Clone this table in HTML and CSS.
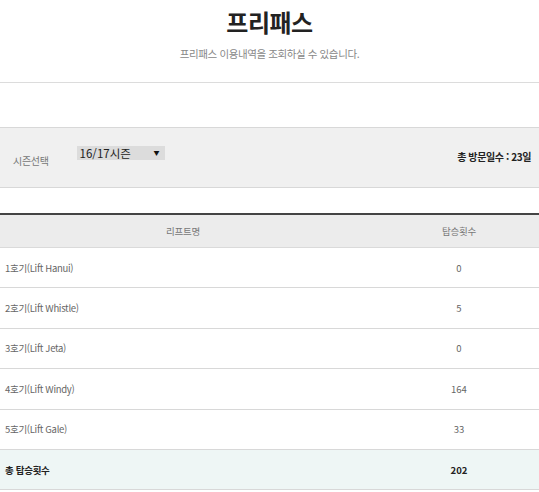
FILE: index.html
```html
<!DOCTYPE html>
<html lang="ko">
<head>
<meta charset="utf-8">
<title>프리패스</title>
<link rel="stylesheet" href="styles.css">
</head>
<body>
<div class="page">
  <header class="head">
    <h1 class="title">프리패스</h1>
    <p class="sub">프리패스 이용내역을 조회하실 수 있습니다.</p>
  </header>

  <section class="filter">
    <div class="filter-left">
      <span class="filter-label">시즌선택</span>
      <div class="select"><span>16/17시즌</span><span class="arrow">▼</span></div>
    </div>
    <div class="visits">총 방문일수 : 23일</div>
  </section>

  <table class="lifts">
    <thead>
      <tr><th class="c1">리프트명</th><th class="c2">탑승횟수</th></tr>
    </thead>
    <tbody>
      <tr><td class="c1">1호기(Lift Hanui)</td><td class="c2">0</td></tr>
      <tr><td class="c1">2호기(Lift Whistle)</td><td class="c2">5</td></tr>
      <tr><td class="c1">3호기(Lift Jeta)</td><td class="c2">0</td></tr>
      <tr><td class="c1">4호기(Lift Windy)</td><td class="c2">164</td></tr>
      <tr><td class="c1">5호기(Lift Gale)</td><td class="c2">33</td></tr>
      <tr class="total"><td class="c1">총 탑승횟수</td><td class="c2">202</td></tr>
    </tbody>
  </table>
</div>
</body>
</html>
```
FILE: styles.css
```css
html, body {
  margin: 0;
  padding: 0;
  background: #fff;
  overflow: hidden;
}
body {
  font-family: "Noto Sans CJK KR", "Noto Sans", sans-serif;
  color: #555;
}
.page {
  width: 539px;
  overflow: hidden;
}
.head {
  text-align: center;
  border-bottom: 1px solid #dcdcdc;
  height: 83px;
  box-sizing: border-box;
  padding-top: 6px;
}
.title {
  margin: 0;
  font-size: 24px;
  line-height: 32px;
  font-weight: 700;
  color: #222;
  letter-spacing: -0.5px;
}
.sub {
  margin: 9px 0 0;
  font-size: 10.5px;
  line-height: 14px;
  color: #888;
  letter-spacing: -0.4px;
}
.filter {
  margin-top: 44px;
  height: 61px;
  box-sizing: border-box;
  background: #f0f0f0;
  border-top: 1px solid #d8d8d8;
  border-bottom: 1px solid #d8d8d8;
  display: flex;
  align-items: center;
  justify-content: space-between;
  padding: 0 8px 0 13px;
}
.filter-left {
  display: flex;
  align-items: center;
  gap: 28px;
}
.filter-label {
  font-size: 10px;
  color: #777;
  margin-top: 5px;
  letter-spacing: -0.3px;
}
.select {
  width: 88px;
  height: 14px;
  background: #dcdcdc;
  display: flex;
  align-items: center;
  justify-content: space-between;
  box-sizing: border-box;
  padding: 0 5px 0 3px;
  margin-top: -10px;
  font-size: 11.5px;
  color: #222;
}
.select .arrow {
  font-size: 6px;
  color: #111;
}
.visits {
  font-size: 10px;
  font-weight: 700;
  color: #222;
  margin-top: -3px;
  letter-spacing: -0.4px;
}
.lifts {
  margin-top: 25px;
  width: 552px;
  border-collapse: collapse;
  border-top: 2px solid #444;
  font-size: 9.5px;
  table-layout: fixed;
}
.lifts th {
  height: 32px;
  background: #ececec;
  font-weight: 400;
  color: #777;
  border-bottom: 1px solid #dadada;
  padding: 0;
  letter-spacing: -0.3px;
}
.lifts .c1 { width: 366px; }
.lifts td {
  height: 40.4px;
  box-sizing: border-box;
  border-bottom: 1px solid #d8d8d8;
  padding: 0;
  color: #666;
}
.lifts td.c1 {
  text-align: left;
  padding-left: 5px;
  letter-spacing: -0.3px;
}
.lifts td.c2 {
  text-align: center;
}
.lifts tr.total td {
  background: #eef6f5;
  font-weight: 700;
  color: #222;
}
```
